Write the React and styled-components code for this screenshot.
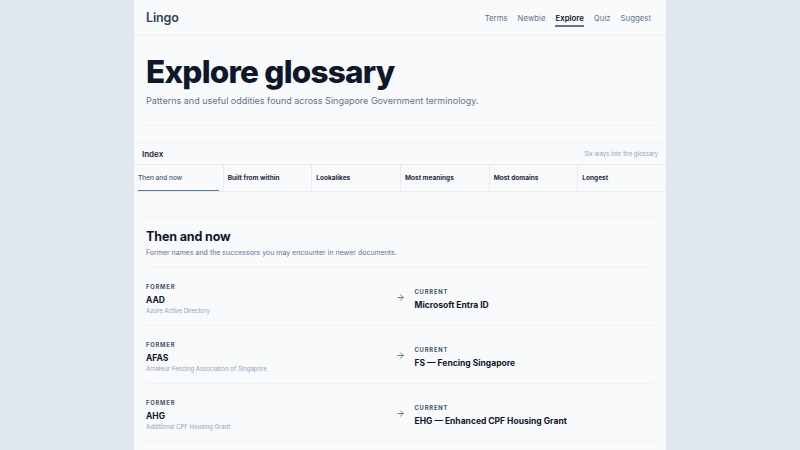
import React from 'react'
import styled, { createGlobalStyle } from 'styled-components'
import { ArrowRight } from 'lucide-react'

const GlobalStyle = createGlobalStyle`
  html, body {
    margin: 0;
    padding: 0;
    height: 100%;
    overflow: hidden;
  }
  body {
    background: #e2e8f0;
    font-family: Inter, "Noto Sans", "Liberation Sans", sans-serif;
    -webkit-font-smoothing: antialiased;
  }
`

const Page = styled.div`
  width: 532px;
  height: 450px;
  margin: 0 auto;
  background: #f8fafc;
  overflow: hidden;
`

const Header = styled.header`
  height: 35px;
  padding: 0 15px 0 12px;
  display: flex;
  align-items: center;
  justify-content: space-between;
  border-bottom: 1px solid #eef1f5;
`

const Logo = styled.div`
  font-size: 12.5px;
  font-weight: 600;
  color: #334155;
  letter-spacing: -0.01em;
`

const Nav = styled.nav`
  display: flex;
  gap: 10px;
`

const NavLink = styled.a`
  position: relative;
  font-size: 7.8px;
  font-weight: ${p => (p.$active ? 600 : 400)};
  color: ${p => (p.$active ? '#0f172a' : '#64748b')};
  text-decoration: none;

  &::after {
    content: '';
    display: ${p => (p.$active ? 'block' : 'none')};
    position: absolute;
    left: 0;
    right: 0;
    bottom: -4px;
    height: 1.5px;
    background: #64748b;
  }
`

const Hero = styled.section`
  margin: 0 12px;
  padding: 18px 0 17px;
  border-bottom: 1px solid #eef1f5;
`

const Title = styled.h1`
  margin: 0;
  font-size: 31.5px;
  line-height: 36px;
  font-weight: 800;
  letter-spacing: -0.025em;
  color: #0f172a;
`

const Lead = styled.p`
  margin: 4px 0 0;
  font-size: 9px;
  line-height: 14px;
  color: #64748b;
`

const IndexBox = styled.div`
  margin-top: 16px;
  border-top: 1px solid #eef1f5;
  border-bottom: 1px solid #e8ecf1;
`

const IndexHead = styled.div`
  height: 21px;
  padding: 0 8px;
  display: flex;
  align-items: center;
  justify-content: space-between;
  border-bottom: 1px solid #e8ecf1;
`

const IndexTitle = styled.span`
  font-size: 8px;
  font-weight: 600;
  color: #1e293b;
`

const IndexNote = styled.span`
  font-size: 6px;
  color: #94a3b8;
`

const Tabs = styled.div`
  display: grid;
  grid-template-columns: repeat(6, 1fr);
`

const Tab = styled.div`
  position: relative;
  height: 26px;
  padding: 0 4px;
  display: flex;
  align-items: center;
  font-size: 6.5px;
  font-weight: ${p => (p.$active ? 500 : 700)};
  color: ${p => (p.$active ? '#475569' : '#1e293b')};
  border-left: ${p => (p.$first ? 'none' : '1px solid #e8ecf1')};

  &::after {
    content: '';
    display: ${p => (p.$active ? 'block' : 'none')};
    position: absolute;
    left: 4px;
    right: 4px;
    bottom: 0;
    height: 1.5px;
    background: #64748b;
  }
`

const Section = styled.section`
  margin: 25px 12px 0;
  border-top: 1px solid #eef1f5;
`

const SectionHead = styled.div`
  padding: 11px 0 9px;
  border-bottom: 1px solid #eef1f5;
`

const SectionTitle = styled.h2`
  margin: 0;
  font-size: 12.5px;
  line-height: 16px;
  font-weight: 700;
  letter-spacing: -0.01em;
  color: #0f172a;
`

const SectionLead = styled.p`
  margin: 3px 0 0;
  font-size: 7px;
  line-height: 10px;
  color: #64748b;
`

const Row = styled.div`
  display: grid;
  grid-template-columns: 1fr auto 1fr;
  column-gap: 10px;
  align-items: center;
  padding: 15px 0 10px;
  border-bottom: 1px solid #eef1f5;
`

const Side = styled.div`
  display: flex;
  flex-direction: column;
`

const Label = styled.span`
  font-size: 5.8px;
  line-height: 8px;
  font-weight: 700;
  letter-spacing: 0.14em;
  text-transform: uppercase;
  color: #475569;
`

const Term = styled.span`
  margin-top: 3px;
  font-size: 8.5px;
  line-height: 12px;
  font-weight: 700;
  color: #0f172a;
`

const Expansion = styled.span`
  font-size: 6px;
  line-height: 9px;
  color: #94a3b8;
`

const Arrow = styled(ArrowRight)`
  width: 9px;
  height: 9px;
  color: #475569;
  margin-top: -3px;
`

const navItems = ['Terms', 'Newbie', 'Explore', 'Quiz', 'Suggest']
const tabs = ['Then and now', 'Built from within', 'Lookalikes', 'Most meanings', 'Most domains', 'Longest']
const pairs = [
  { former: 'AAD', full: 'Azure Active Directory', current: 'Microsoft Entra ID' },
  { former: 'AFAS', full: 'Amateur Fencing Association of Singapore', current: 'FS — Fencing Singapore' },
  { former: 'AHG', full: 'Additional CPF Housing Grant', current: 'EHG — Enhanced CPF Housing Grant' },
]

const App = () => {
  return (
    <>
      <GlobalStyle />
      <Page>
        <Header>
          <Logo>Lingo</Logo>
          <Nav>
            {navItems.map(item => (
              <NavLink key={item} href="#" $active={item === 'Explore'}>{item}</NavLink>
            ))}
          </Nav>
        </Header>

        <Hero>
          <Title>Explore glossary</Title>
          <Lead>Patterns and useful oddities found across Singapore Government terminology.</Lead>
        </Hero>

        <IndexBox>
          <IndexHead>
            <IndexTitle>Index</IndexTitle>
            <IndexNote>Six ways into the glossary</IndexNote>
          </IndexHead>
          <Tabs>
            {tabs.map((t, i) => (
              <Tab key={t} $first={i === 0} $active={i === 0}>{t}</Tab>
            ))}
          </Tabs>
        </IndexBox>

        <Section>
          <SectionHead>
            <SectionTitle>Then and now</SectionTitle>
            <SectionLead>Former names and the successors you may encounter in newer documents.</SectionLead>
          </SectionHead>
          {pairs.map(p => (
            <Row key={p.former}>
              <Side>
                <Label>Former</Label>
                <Term>{p.former}</Term>
                <Expansion>{p.full}</Expansion>
              </Side>
              <Arrow strokeWidth={2} />
              <Side>
                <Label>Current</Label>
                <Term>{p.current}</Term>
              </Side>
            </Row>
          ))}
        </Section>
      </Page>
    </>
  )
}

export default App
